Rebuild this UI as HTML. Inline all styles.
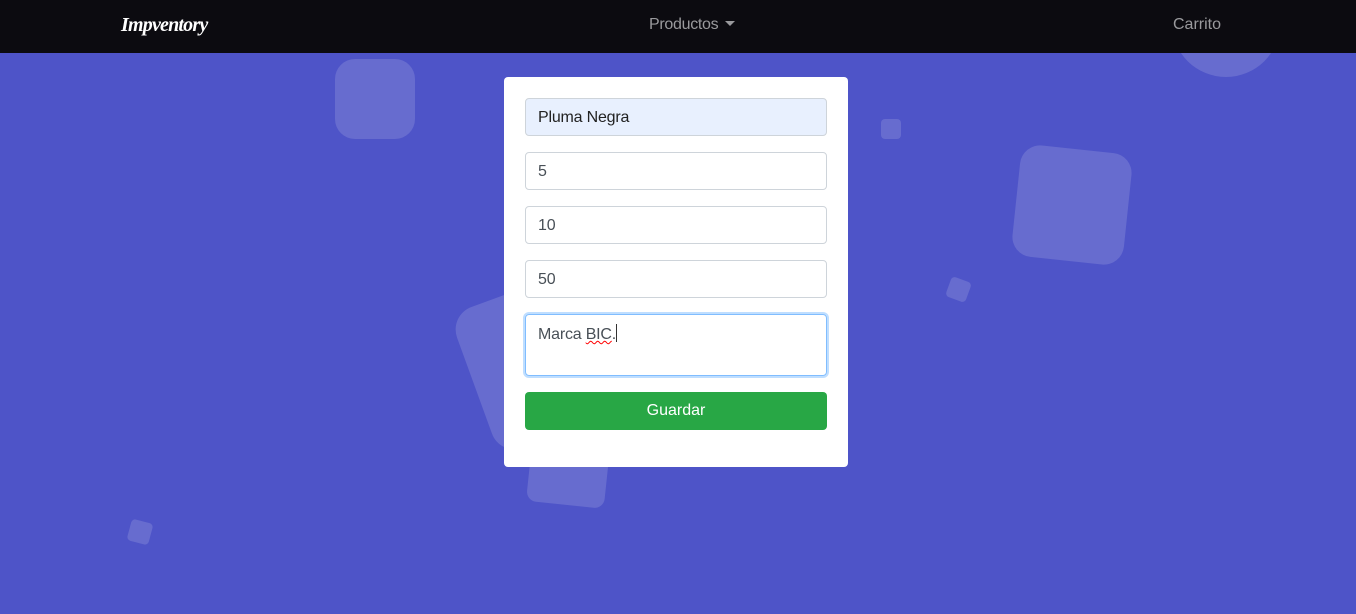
<!DOCTYPE html>
<html><head><meta charset="utf-8"><style>
*{box-sizing:border-box;margin:0;padding:0}
html,body{width:1356px;height:614px;overflow:hidden}
body{background:#4e54c8;font-family:"Liberation Sans",sans-serif;position:relative}
.nav{position:absolute;left:0;top:0;width:1356px;height:53px;background:#0c0b10;z-index:10}
.brand{position:absolute;left:121px;top:14px;color:#fff;font-family:"Liberation Serif",serif;font-style:italic;font-weight:bold;font-size:20px;letter-spacing:-0.8px}
.prod{position:absolute;left:649px;top:16px;color:#9a9a9d;font-size:16px;letter-spacing:-0.3px}
.prod:after{content:"";display:inline-block;margin-left:7px;vertical-align:3px;border-left:5px solid transparent;border-right:5px solid transparent;border-top:5px solid #9a9a9d}
.cart{position:absolute;left:1173px;top:16px;color:#9a9a9d;font-size:16px}
.sh{position:absolute;background:rgba(255,255,255,0.14);border-radius:18%}
.card{position:absolute;left:504px;top:77px;width:344px;height:390px;background:#fff;border-radius:4px;z-index:2}
.in{position:absolute;left:21px;width:302px;height:38px;border:1px solid #ced4da;border-radius:4px;padding:0 12px;font-size:16px;color:#495057;line-height:38px;letter-spacing:-0.2px}
.btn{position:absolute;left:21px;top:315px;width:302px;height:38px;background:#28a745;border-radius:4px;color:#fff;text-align:center;line-height:38px;font-size:16px}
</style></head><body>
<div class="sh" style="left:335px;top:59px;width:80px;height:80px;border-radius:20px"></div>
<div class="sh" style="left:881px;top:119px;width:20px;height:20px;border-radius:4px"></div>
<div class="sh" style="left:1016px;top:149px;width:112px;height:112px;border-radius:20px;transform:rotate(6deg)"></div>
<div class="sh" style="left:948px;top:279px;width:21px;height:21px;border-radius:4px;transform:rotate(20deg)"></div>
<div class="sh" style="left:470px;top:285px;width:150px;height:150px;border-radius:24px;transform:rotate(-20deg)"></div>
<div class="sh" style="left:530px;top:425px;width:78px;height:80px;border-radius:10px;transform:rotate(6deg)"></div>
<div class="sh" style="left:129px;top:521px;width:22px;height:22px;border-radius:4px;transform:rotate(15deg)"></div>
<div class="sh" style="left:1172px;top:-30px;width:108px;height:107px;border-radius:50%"></div>
<div class="nav"><div class="brand">Impventory</div><div class="prod">Productos</div><div class="cart">Carrito</div></div>
<div class="card">
<div class="in" style="top:21px;background:#e8f0fe;color:#222">Pluma Negra</div>
<div class="in" style="top:75px">5</div>
<div class="in" style="top:129px">10</div>
<div class="in" style="top:183px">50</div>
<div class="in" style="top:237px;height:62px;line-height:normal;padding-top:9px;border-color:#80bdff;box-shadow:0 0 0 2px rgba(0,123,255,.25)">Marca <span style="text-decoration:underline wavy red;text-decoration-thickness:1px">BIC</span>.<span style="display:inline-block;width:1px;height:18px;background:#333;vertical-align:-3px"></span></div>
<div class="btn">Guardar</div>
</div>
</body></html>
